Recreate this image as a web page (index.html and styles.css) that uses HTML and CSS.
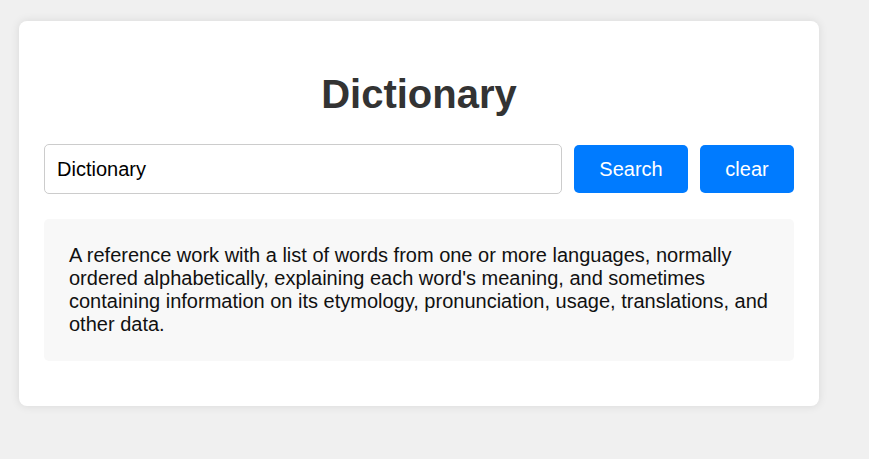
FILE: index.html
```html
<!DOCTYPE html>
<html lang="en">
<head>
<meta charset="utf-8">
<title>Dictionary</title>
<link rel="stylesheet" href="styles.css">
</head>
<body>
<div class="card">
  <h1 class="title">Dictionary</h1>
  <div class="search-row">
    <input class="search-input" type="text" value="Dictionary">
    <button class="btn btn-search">Search</button>
    <button class="btn btn-clear">clear</button>
  </div>
  <div class="result">
    <p class="definition">A reference work with a list of words from one or more languages, normally ordered alphabetically, explaining each word's meaning, and sometimes containing information on its etymology, pronunciation, usage, translations, and other data.</p>
  </div>
</div>
</body>
</html>
```
FILE: styles.css
```css
html, body {
  margin: 0;
  padding: 0;
}
body {
  background: #f0f0f0;
  font-family: "Liberation Sans", Arial, sans-serif;
  padding: 21px 0 0 19px;
  height: 459px;
  box-sizing: border-box;
}
.card {
  width: 800px;
  box-sizing: border-box;
  background: #fff;
  border-radius: 8px;
  box-shadow: 0 0 10px rgba(0, 0, 0, 0.1);
  padding: 25px 25px 45px;
}
.title {
  margin: 26px 0 27px;
  text-align: center;
  font-size: 40px;
  font-weight: bold;
  color: #333;
}
.search-row {
  display: flex;
  align-items: center;
  gap: 12px;
}
.search-input {
  flex: 1;
  min-width: 0;
  height: 50px;
  box-sizing: border-box;
  border: 1px solid #ccc;
  border-radius: 5px;
  padding: 0 12px;
  font-family: inherit;
  font-size: 20px;
  color: #000;
  background: #fff;
  outline: none;
}
.btn {
  height: 48px;
  padding: 0;
  border: none;
  border-radius: 5px;
  background: #007bff;
  color: #fff;
  font-family: inherit;
  font-size: 20px;
  cursor: pointer;
}
.btn-search {
  width: 114px;
}
.btn-clear {
  width: 94px;
}
.result {
  margin-top: 25px;
  background: #f8f8f8;
  border-radius: 5px;
  padding: 25px;
}
.definition {
  margin: 0;
  font-size: 20px;
  line-height: 23px;
  color: #111;
}
```
